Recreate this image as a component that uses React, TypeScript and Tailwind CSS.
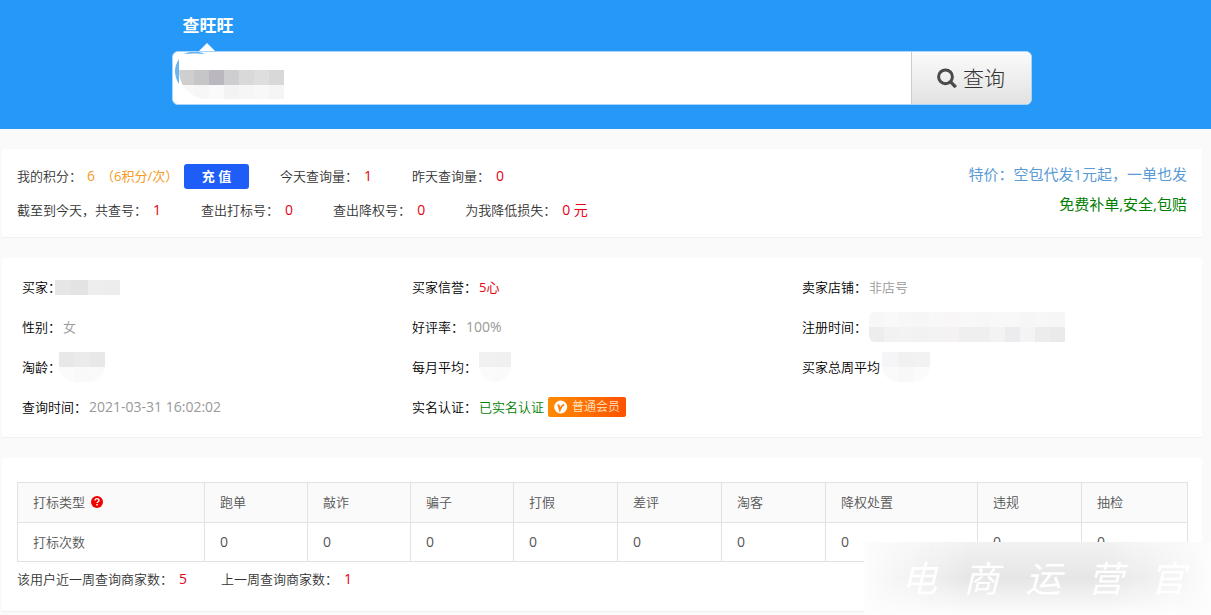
import { useState } from 'react';
import type { ReactNode } from 'react';

const tagColumns = [
    { name: '打标类型', width: 'w-[187px]' },
    { name: '跑单', width: 'w-[103px]' },
    { name: '敲诈', width: 'w-[103px]' },
    { name: '骗子', width: 'w-[103px]' },
    { name: '打假', width: 'w-[104px]' },
    { name: '差评', width: 'w-[104px]' },
    { name: '淘客', width: 'w-[104px]' },
    { name: '降权处置', width: 'w-[152px]' },
    { name: '违规', width: 'w-[104px]' },
    { name: '抽检', width: 'w-[106px]' },
];

function SearchIcon() {
    return (
        <svg className="w-5 h-5" viewBox="0 0 20 20" fill="none" stroke="#4a4a4a" aria-hidden="true">
            <circle cx="8.5" cy="8.8" r="6.9" strokeWidth="3" />
            <path d="M13.6 13.9l5.2 5.2" strokeWidth="3.4" />
        </svg>
    );
}

function HelpIcon() {
    return (
        <svg className="w-3 h-3" viewBox="0 0 12 12" aria-hidden="true">
            <circle cx="6" cy="6" r="6" fill="#f00000" />
            <path d="M4.1 4.6c0-2.6 3.9-2.5 3.9-.2 0 1.4-1.9 1.3-1.9 2.7" fill="none" stroke="#fff" strokeWidth="1.4" />
            <path d="M5.3 8.1h1.5v1.4H5.3z" fill="#fff" />
        </svg>
    );
}

function MemberBadge() {
    return (
        <span className="flex items-center gap-1 h-5 ml-1 px-1.5 rounded-xs bg-linear-to-r from-[#ff8a00] to-[#ff5000] text-xs text-[#ffe3c8]">
            <svg className="w-3.5 h-3.5" viewBox="0 0 14 14" aria-hidden="true">
                <circle cx="6.7" cy="7" r="6.5" fill="#fff" />
                <path d="M4.2 4.4l1.7 5.4c.9-2.6 2-4.2 4.100-5.300" fill="none" stroke="#ff7a00" strokeWidth="1.9" />
            </svg>
            普通会员
        </span>
    );
}

// Pixelated block that hides private values
function Mosaic({ rows, className = '' }: { rows: string[][]; className?: string }) {
    return (
        <span className={`flex flex-col overflow-hidden ${className}`} aria-hidden="true">
            {rows.map((row, i) => (
                <span key={i} className="flex flex-1">
                    {row.map((color, j) => (
                        <span key={j} className={`flex-1 ${color}`} />
                    ))}
                </span>
            ))}
        </span>
    );
}

function Stat({ label, value }: { label: string; value: string }) {
    return (
        <span className="flex gap-1.5">
            {label}：<span className="text-sm leading-5 font-normal text-[#e60012]">{value}</span>
        </span>
    );
}

function Field({ label, children }: { label: string; children?: ReactNode }) {
    return (
        <div className="flex items-center h-10">
            <dt className="text-black">{label}</dt>
            <dd className="flex items-center pl-0.5 text-[#999]">{children}</dd>
        </div>
    );
}

function Card({ className = '', children }: { className?: string; children: ReactNode }) {
    return <section className={`bg-white border-b border-[#f0f0f0] ${className}`}>{children}</section>;
}

export default function App() {
    const [keyword, setKeyword] = useState('');

    return (
        <div className="relative min-h-screen overflow-hidden bg-[#fafafa] font-['Open_Sans','Noto_Sans_CJK_SC',sans-serif] font-[350] text-[13px] leading-5 text-[#333]">
            <header className="bg-[#2699f8] pt-3 pb-6 pr-2">
                <form className="w-full max-w-[860px] mx-auto" onSubmit={(e) => e.preventDefault()}>
                    <label htmlFor="wangwang" className="relative block w-fit ml-[11px] pb-3 text-[17px] leading-[27px] font-bold text-white">
                        查旺旺
                        <svg className="absolute bottom-0 left-4 w-4 h-2" viewBox="0 0 16 8" aria-hidden="true">
                            <path d="M0 8l8-8 8 8z" fill="#fff" />
                        </svg>
                    </label>
                    <div className="relative flex h-[54px] rounded-md border border-[#a9d5fa] bg-white overflow-hidden">
                        <input
                            id="wangwang"
                            type="text"
                            value={keyword}
                            onChange={(e) => setKeyword(e.target.value)}
                            className="flex-1 min-w-0 px-3 text-lg outline-none"
                        />
                        <svg className="absolute left-0.5 top-0 w-9 h-9 pointer-events-none" viewBox="0 0 36 36" aria-hidden="true">
                            <path d="M4 7Q-4 19 4 32z" fill="#6cb4ee" />
                            <path d="M9 2Q19-3 30 2Q19 1 9 2z" fill="#6cb4ee" />
                        </svg>
                        <Mosaic
                            className="absolute left-1.5 top-[18px] w-[105px] h-[29px] rounded-bl-[28px] pointer-events-none"
                            rows={[
                                ['bg-[#cfcfcf]', 'bg-[#c6c6c8]', 'bg-[#bab8be]', 'bg-[#cecdd0]', 'bg-[#d9d9d9]', 'bg-[#dededf]', 'bg-[#d8d8d8]'],
                                ['bg-[#f8f8f8]', 'bg-[#f7f7f7]', 'bg-[#fafafa]', 'bg-[#f3f3f3]', 'bg-[#f6f6f6]', 'bg-[#f8f8f8]', 'bg-[#f5f5f5]'],
                            ]}
                        />
                        <button
                            type="submit"
                            className="flex items-center justify-center gap-1.5 w-30 border-l border-[#ccc] bg-linear-to-b from-[#fbfbfb] to-[#e2e2e2] text-[21px] font-light text-[#333]"
                        >
                            <SearchIcon />
                            查询
                        </button>
                    </div>
                </form>
            </header>

            <main className="flex flex-col gap-5 pt-5 pl-0.5 pr-[9px]">
                <Card className="flex justify-between h-[89px] px-[15px]">
                    <div className="flex flex-col gap-2 pt-3.5">
                        <div className="flex items-center h-[26px]">
                            <span className="w-[70px]">我的积分：</span>
                            <span className="flex gap-1.5 w-[97px] font-normal text-[#f59a23]">
                                <span className="text-sm leading-5">6</span>
                                <span>（6积分/次）</span>
                            </span>
                            <button type="button" className="w-[65px] h-[25px] mr-[31px] rounded-[3px] bg-[#1e5df8] font-bold text-white">
                                充 值
                            </button>
                            <div className="flex gap-10">
                                <Stat label="今天查询量" value="1" />
                                <Stat label="昨天查询量" value="0" />
                            </div>
                        </div>
                        <div className="flex items-center gap-10 h-[26px]">
                            <Stat label="截至到今天，共查号" value="1" />
                            <Stat label="查出打标号" value="0" />
                            <Stat label="查出降权号" value="0" />
                            <Stat label="为我降低损失" value="0 元" />
                        </div>
                    </div>
                    <div className="flex flex-col items-end pt-2.5 text-[15px] leading-[30px] font-normal">
                        <a href="#" className="text-[#5b9bd5]">特价：空包代发1元起，一单也发</a>
                        <a href="#" className="text-[#008000]">免费补单,安全,包赔</a>
                    </div>
                </Card>

                <Card className="pl-5 pr-2.5 pt-[9px] pb-2.5">
                    <dl className="grid grid-cols-3">
                        <Field label="买家：">
                            <Mosaic className="-ml-2 w-[65px] h-[15px]" rows={[['bg-[#e6e6e6]', 'bg-[#e3e3e3]', 'bg-[#eeeeee]', 'bg-[#ededed]']]} />
                        </Field>
                        <Field label="买家信誉：">
                            <span className="font-normal text-[#e60012]">5心</span>
                        </Field>
                        <Field label="卖家店铺：">非店号</Field>
                        <Field label="性别：">女</Field>
                        <Field label="好评率：">
                            <span className="text-sm font-normal">100%</span>
                        </Field>
                        <Field label="注册时间：">
                            <Mosaic
                                className="w-[196px] h-[30px] rounded-l-md"
                                rows={[
                                    ['bg-[#f7f7f7]', 'bg-[#f9f9f9]', 'bg-[#f7f7f7]', 'bg-[#f6f6f6]', 'bg-[#f8f8f8]', 'bg-[#f8f6f6]', 'bg-[#f8f8f8]', 'bg-[#f7f7f7]', 'bg-[#f8f8f8]', 'bg-[#f8f8f8]', 'bg-[#f6f6f6]', 'bg-[#f7f7f7]', 'bg-[#f6f6f6]'],
                                    ['bg-[#ededee]', 'bg-[#f2f2f2]', 'bg-[#f3f3f3]', 'bg-[#f2f2f3]', 'bg-[#f3f3f3]', 'bg-[#f4f2f2]', 'bg-[#efeff0]', 'bg-[#efeff0]', 'bg-[#f3f3f3]', 'bg-[#ececee]', 'bg-[#f4f4f4]', 'bg-[#ececed]', 'bg-[#eaeaec]'],
                                ]}
                            />
                        </Field>
                        <Field label="淘龄：">
                            <Mosaic className="-ml-1 w-[46px] h-[30px] rounded-b-2xl" rows={[['bg-[#e8e8e9]', 'bg-[#ebebeb]', 'bg-[#e8e8e8]'], ['bg-[#fbfbfb]', 'bg-[#f9f9f9]', 'bg-[#fafafa]']]} />
                        </Field>
                        <Field label="每月平均：">
                            <Mosaic className="w-8 h-[30px] rounded-b-2xl" rows={[['bg-[#f1f1f1]', 'bg-[#f0f0f0]'], ['bg-[#fbfbfb]', 'bg-[#fafafa]']]} />
                        </Field>
                        <Field label="买家总周平均">
                            <Mosaic className="w-12 h-[30px] rounded-b-2xl" rows={[['bg-[#f5f5f7]', 'bg-[#f1f1f2]', 'bg-[#f2f2f3]'], ['bg-[#fafafa]', 'bg-[#f8f8f8]', 'bg-[#fbfbfb]']]} />
                        </Field>
                        <Field label="查询时间：">
                            <span className="text-sm font-normal">2021-03-31 16:02:02</span>
                        </Field>
                        <Field label="实名认证：">
                            <span className="text-[#008000]">已实名认证</span>
                            <MemberBadge />
                        </Field>
                    </dl>
                </Card>

                <Card className="px-[15px] pt-6 pb-[22px]">
                    <table className="w-full table-fixed border-collapse text-left text-[#555]">
                        <thead className="bg-[#fafafa]">
                            <tr className="h-10">
                                {tagColumns.map((column, i) => (
                                    <th key={column.name} scope="col" className={`border border-[#e2e2e2] px-[15px] pb-0.5 font-[350] ${column.width}`}>
                                        <span className="flex items-center gap-1.5">
                                            {column.name}
                                            {i === 0 && <HelpIcon />}
                                        </span>
                                    </th>
                                ))}
                            </tr>
                        </thead>
                        <tbody>
                            <tr className="h-[39px]">
                                <th scope="row" className="border border-[#e2e2e2] px-[15px] font-[350]">打标次数</th>
                                {tagColumns.slice(1).map((column) => (
                                    <td key={column.name} className="border border-[#e2e2e2] px-[15px] text-sm leading-5 font-normal">0</td>
                                ))}
                            </tr>
                        </tbody>
                    </table>
                    <div className="flex gap-[34px] pt-[7px]">
                        <Stat label="该用户近一周查询商家数" value="5" />
                        <Stat label="上一周查询商家数" value="1" />
                    </div>
                </Card>
            </main>

            {/* Watermark */}
            <div className="absolute right-0 bottom-0 flex items-center justify-around w-[347px] h-[73px] pl-6 pr-3 bg-[#fdfdfd] overflow-hidden pointer-events-none">
                <div className="absolute inset-0 bg-linear-to-b from-[#f2f2f2] via-[#e6e6e6] to-[#fdfdfd] mask-x-from-70% mask-x-to-100%" />
                {['电', '商', '运', '营', '官'].map((char) => (
                    <span key={char} className="relative text-[36px] leading-none italic font-normal text-white">{char}</span>
                ))}
            </div>
        </div>
    );
}
